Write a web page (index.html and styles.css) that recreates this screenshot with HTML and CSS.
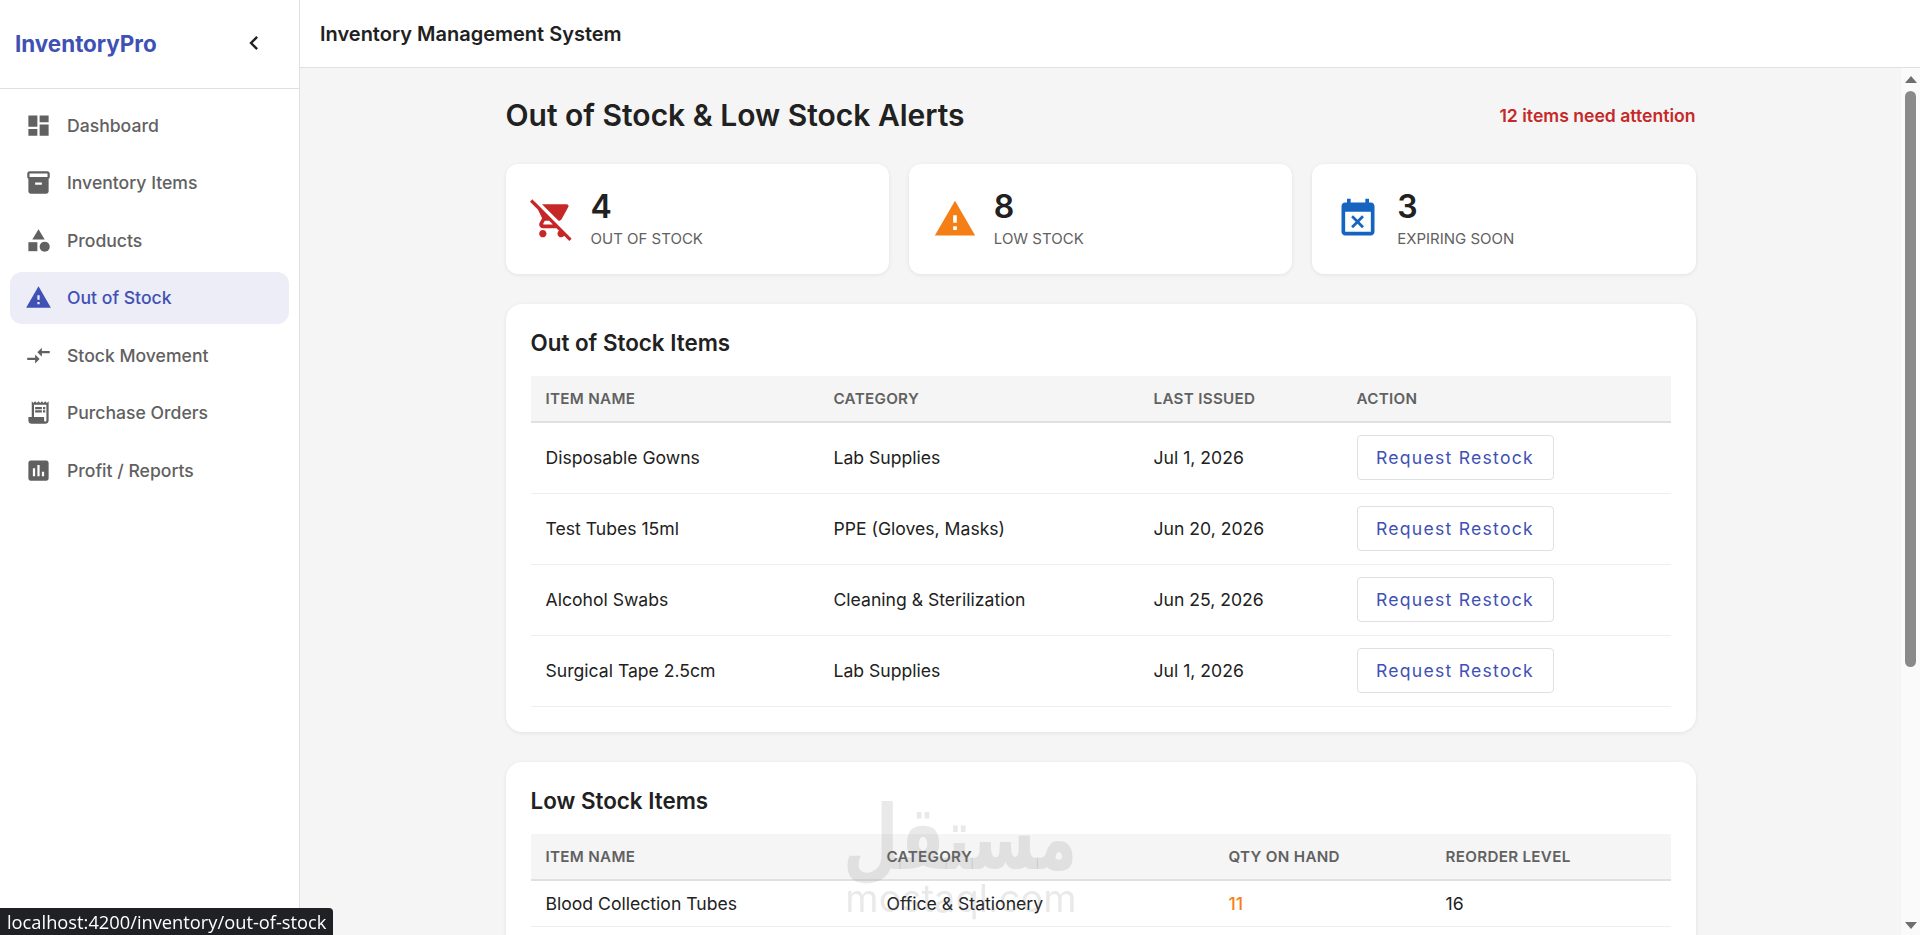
FILE: index.html
```html
<!DOCTYPE html>
<html lang="en">
<head>
  <meta charset="UTF-8" />
  <meta name="viewport" content="width=device-width, initial-scale=1.0"/>
  <title>InventoryPro - Out of Stock</title>
  <link rel="stylesheet" href="styles.css">
</head>
<body>

  <aside class="sidebar">
    <div class="brand">
      <span class="brand-name">InventoryPro</span>
      <svg class="collapse" viewBox="0 0 24 24"><path d="M15.41 7.41 14 6l-6 6 6 6 1.41-1.41L10.83 12z"/></svg>
    </div>
    <nav class="nav">
      <a class="nav-item"><svg viewBox="0 0 24 24"><path d="M3 13h8V3H3v10zm0 8h8v-6H3v6zm10 0h8V11h-8v10zm0-18v6h8V3h-8z"/></svg>Dashboard</a>
      <a class="nav-item"><svg viewBox="0 0 24 24"><path d="M20 2H4c-1 0-2 .9-2 2v3.01c0 .72.43 1.34 1 1.69V20c0 1.1 1.1 2 2 2h14c.9 0 2-.9 2-2V8.7c.57-.35 1-.97 1-1.69V4c0-1.1-1-2-2-2zm-5 12H9v-2h6v2zm5-7H4V4l16-.02V7z"/></svg>Inventory Items</a>
      <a class="nav-item"><svg viewBox="0 0 24 24"><path d="M12 2l-5.5 9h11z"/><circle cx="17.5" cy="17.5" r="4.5"/><path d="M3 13.5h8v8H3z"/></svg>Products</a>
      <a class="nav-item active"><svg viewBox="0 0 24 24"><path d="M1 21h22L12 2 1 21zm12-3h-2v-2h2v2zm0-4h-2v-4h2v4z"/></svg>Out of Stock</a>
      <a class="nav-item"><svg viewBox="0 0 24 24"><path d="M9.01 14H2v2h7.01v3L13 15l-3.99-4v3zm5.98-1v-3H22V8h-7.01V5L11 9l3.99 4z"/></svg>Stock Movement</a>
      <a class="nav-item"><svg viewBox="0 0 24 24"><path d="M19.5 3.5 18 2l-1.5 1.5L15 2l-1.5 1.5L12 2l-1.5 1.5L9 2 7.5 3.5 6 2v14H3v3c0 1.66 1.34 3 3 3h12c1.66 0 3-1.34 3-3V2l-1.5 1.5zM19 19c0 .55-.45 1-1 1s-1-.45-1-1v-3H8V5h11v14z"/><path d="M9 7h6v2H9zm7 0h2v2h-2zm-7 3h6v2H9zm7 0h2v2h-2z"/></svg>Purchase Orders</a>
      <a class="nav-item"><svg viewBox="0 0 24 24"><path d="M19 3H5c-1.1 0-2 .9-2 2v14c0 1.1.9 2 2 2h14c1.1 0 2-.9 2-2V5c0-1.1-.9-2-2-2zM9 17H7v-7h2v7zm4 0h-2V7h2v10zm4 0h-2v-4h2v4z"/></svg>Profit / Reports</a>
    </nav>
  </aside>

  <div class="main">
    <header class="topbar">Inventory Management System</header>

    <div class="body-row">
      <div class="content">
        <div class="page">
          <div class="page-head">
            <h1>Out of Stock &amp; Low Stock Alerts</h1>
            <span class="attention">12 items need attention</span>
          </div>

          <div class="stats">
            <div class="stat">
              <svg class="icon-red" viewBox="0 0 24 24"><path d="M22.73 22.73 2.77 2.77 2 2l-.73-.73L0 2.54l4.39 4.39 2.21 4.66-1.35 2.45c-.16.28-.25.61-.25.96 0 1.1.9 2 2 2h7.46l1.38 1.38c-.5.36-.83.95-.83 1.62 0 1.1.89 2 1.99 2 .67 0 1.26-.33 1.62-.84L21.46 24l1.27-1.27zM7.42 15c-.14 0-.25-.11-.25-.25l.03-.12.9-1.63h2.36l2 2H7.42zm8.13-2c.75 0 1.41-.41 1.75-1.03l3.58-6.49c.08-.14.12-.31.12-.48 0-.55-.45-1-1-1H6.54l9.01 9zM7 18c-1.1 0-1.99.9-1.99 2S5.9 22 7 22s2-.9 2-2-.9-2-2-2z"/></svg>
              <div>
                <div class="stat-num">4</div>
                <div class="stat-label">Out of Stock</div>
              </div>
            </div>
            <div class="stat">
              <svg class="icon-orange" viewBox="0 0 24 24"><path d="M1 21h22L12 2 1 21zm12-3h-2v-2h2v2zm0-4h-2v-4h2v4z"/></svg>
              <div>
                <div class="stat-num">8</div>
                <div class="stat-label">Low Stock</div>
              </div>
            </div>
            <div class="stat">
              <svg class="icon-blue" viewBox="0 0 24 24"><path d="M9.31 17l2.44-2.44L14.19 17l1.06-1.06-2.44-2.44 2.44-2.44L14.19 10l-2.44 2.44L9.31 10l-1.06 1.06 2.44 2.44-2.44 2.44L9.31 17zM19 3h-1V1h-2v2H8V1H6v2H5c-1.11 0-1.99.9-1.99 2L3 19c0 1.1.89 2 2 2h14c1.1 0 2-.9 2-2V5c0-1.1-.9-2-2-2zm0 16H5V8h14v11z"/></svg>
              <div>
                <div class="stat-num">3</div>
                <div class="stat-label">Expiring Soon</div>
              </div>
            </div>
          </div>

          <section class="card">
            <h2>Out of Stock Items</h2>
            <table class="out-table">
              <thead>
                <tr><th>Item Name</th><th>Category</th><th>Last Issued</th><th>Action</th></tr>
              </thead>
              <tbody>
                <tr><td>Disposable Gowns</td><td>Lab Supplies</td><td>Jul 1, 2026</td><td><button class="restock">Request Restock</button></td></tr>
                <tr><td>Test Tubes 15ml</td><td>PPE (Gloves, Masks)</td><td>Jun 20, 2026</td><td><button class="restock">Request Restock</button></td></tr>
                <tr><td>Alcohol Swabs</td><td>Cleaning &amp; Sterilization</td><td>Jun 25, 2026</td><td><button class="restock">Request Restock</button></td></tr>
                <tr><td>Surgical Tape 2.5cm</td><td>Lab Supplies</td><td>Jul 1, 2026</td><td><button class="restock">Request Restock</button></td></tr>
              </tbody>
            </table>
          </section>

          <section class="card">
            <h2>Low Stock Items</h2>
            <table class="low-table">
              <thead>
                <tr><th>Item Name</th><th>Category</th><th>Qty on Hand</th><th>Reorder Level</th></tr>
              </thead>
              <tbody>
                <tr><td>Blood Collection Tubes</td><td>Office &amp; Stationery</td><td class="qty">11</td><td>16</td></tr>
              </tbody>
            </table>
          </section>
        </div>
      </div>

      <!-- scrollbar of the content pane -->
      <div class="scrollbar">
        <span class="arrow-up"></span>
        <div class="track"><div class="thumb"></div></div>
        <span class="arrow-down"></span>
      </div>
    </div>
  </div>

  <div class="watermark">
    <span class="watermark-word" dir="rtl">مستقل</span>
    <span class="watermark-sub">mostaql.com</span>
  </div>
  <div class="status-link">localhost:4200/inventory/out-of-stock</div>

</body>
</html>
```

FILE: styles.css
```css
* {
  box-sizing: border-box;
}

html, body {
  height: 100%;
}

body {
  margin: 0;
  display: flex;
  overflow: hidden;
  font-family: 'Inter', sans-serif;
  color: #212121;
  background-color: #f5f5f5;
}

/* sidebar */
.sidebar {
  width: 300px;
  flex-shrink: 0;
  background-color: #ffffff;
  border-right: 1px solid #e0e0e0;
}

.brand {
  height: 89px;
  display: flex;
  align-items: center;
  justify-content: space-between;
  padding: 0 31px 2px 15px;
  border-bottom: 1px solid #e0e0e0;
}

.brand-name {
  font-size: 22.4px;
  font-weight: 700;
  color: #3f51b5;
}

.collapse {
  width: 28px;
  height: 28px;
  fill: #212121;
}

.nav {
  display: flex;
  flex-direction: column;
  gap: 5.5px;
  padding: 10px;
}

.nav-item {
  height: 52px;
  display: flex;
  align-items: center;
  gap: 15px;
  padding: 0 15px;
  border-radius: 12px;
  font-size: 17.6px;
  font-weight: 500;
  color: #616161;
}

.nav-item svg {
  width: 27px;
  height: 27px;
  fill: #616161;
  flex-shrink: 0;
}

.nav-item.active {
  background-color: #ededf8;
  color: #3f51b5;
}

.nav-item.active svg {
  fill: #3f51b5;
}

/* main */
.main {
  flex: 1;
  min-width: 0;
  display: flex;
  flex-direction: column;
}

.topbar {
  height: 68px;
  flex-shrink: 0;
  display: flex;
  align-items: center;
  padding: 0 20px;
  background-color: #ffffff;
  border-bottom: 1px solid #e0e0e0;
  font-size: 20px;
  font-weight: 600;
}

.body-row {
  flex: 1;
  min-height: 0;
  display: flex;
}

.content {
  flex: 1;
  min-width: 0;
  overflow: hidden;
}

.page {
  width: 1190px;
  margin: 0 auto;
  padding-top: 24px;
}

.page-head {
  display: flex;
  align-items: center;
  justify-content: space-between;
  height: 46px;
  margin-bottom: 26px;
}

h1 {
  margin: 0;
  font-size: 30px;
  font-weight: 600;
}

.attention {
  font-size: 17.6px;
  font-weight: 600;
  color: #c62828;
}

.stats {
  display: grid;
  grid-template-columns: repeat(3, 1fr);
  gap: 20px;
  margin-bottom: 30px;
}

.stat {
  height: 110px;
  display: flex;
  align-items: center;
  gap: 17px;
  padding: 0 24px;
  background-color: #ffffff;
  border-radius: 12px;
  box-shadow: 0 1px 4px rgba(0,0,0,0.08);
}

.stat svg {
  width: 44px;
  height: 44px;
  flex-shrink: 0;
}

.icon-red { fill: #c62828; }
.icon-orange { fill: #f57f17; }
.icon-blue { fill: #1565c0; }

.stat-num {
  font-size: 32px;
  font-weight: 600;
  line-height: 38px;
}

.stat-label {
  margin-top: 4px;
  padding-bottom: 2px;
  font-size: 15px;
  line-height: 18px;
  color: #616161;
  text-transform: uppercase;
}

.card {
  padding: 25px 25px 25px;
  margin-bottom: 30px;
  background-color: #ffffff;
  border-radius: 16px;
  box-shadow: 0 1px 4px rgba(0,0,0,0.08);
}

h2 {
  margin: 0 0 19px;
  font-size: 22.4px;
  font-weight: 600;
  line-height: 28px;
}

table {
  width: 100%;
  table-layout: fixed;
  border-collapse: collapse;
}

th {
  height: 46px;
  padding: 0 15px;
  text-align: left;
  font-size: 15.2px;
  font-weight: 600;
  letter-spacing: 0.3px;
  color: #616161;
  text-transform: uppercase;
  background-color: #f5f5f5;
  border-bottom: 2px solid #e0e0e0;
}

td {
  padding: 0 15px;
  font-size: 17.6px;
  border-bottom: 1px solid #eeeeee;
}

.out-table td {
  height: 71px;
}

.low-table td {
  height: 47px;
}

.out-table th:nth-child(1) { width: 288px; }
.out-table th:nth-child(2) { width: 320px; }
.out-table th:nth-child(3) { width: 203px; }

.low-table th:nth-child(1) { width: 341px; }
.low-table th:nth-child(2) { width: 342px; }
.low-table th:nth-child(3) { width: 217px; }

.qty {
  font-weight: 500;
  color: #f57f17;
}

.restock {
  width: 197px;
  height: 45px;
  font-family: 'Inter', sans-serif;
  font-size: 17.6px;
  letter-spacing: 1.25px;
  color: #3f51b5;
  background-color: #ffffff;
  border: 1px solid #e0e0e0;
  border-radius: 4px;
}

/* scrollbar */
.scrollbar {
  width: 19px;
  flex-shrink: 0;
  display: flex;
  flex-direction: column;
  align-items: center;
  background-color: #fafafa;
}

.track {
  flex: 1;
  width: 100%;
  padding: 8px 4px 0;
}

.thumb {
  height: 576px;
  background-color: #8a8a8a;
  border-radius: 6px;
}

.arrow-up, .arrow-down {
  width: 0;
  height: 0;
  border-left: 6.5px solid transparent;
  border-right: 6.5px solid transparent;
}

.arrow-up {
  margin-top: 8px;
  border-bottom: 7px solid #6e6e6e;
}

.arrow-down {
  margin-bottom: 6px;
  border-top: 7px solid #6e6e6e;
}

/* overlays */
.watermark {
  position: fixed;
  left: 847px;
  top: 797px;
  width: 230px;
  text-align: center;
  color: rgba(120,120,120,0.16);
  pointer-events: none;
}

.watermark-word {
  display: block;
  font-family: 'DejaVu Sans', sans-serif;
  font-size: 64px;
  font-weight: 700;
  line-height: 83px;
  transform: scaleY(1.4);
}

.watermark-sub {
  display: block;
  margin-left: -2px;
  font-size: 38px;
  line-height: 36px;
}

.status-link {
  position: fixed;
  left: 0;
  bottom: 0;
  height: 27px;
  padding: 0 7px;
  display: flex;
  align-items: center;
  font-family: 'Open Sans', sans-serif;
  font-size: 18.3px;
  color: #ffffff;
  background-color: #202124;
  border-top-right-radius: 4px;
}
```
